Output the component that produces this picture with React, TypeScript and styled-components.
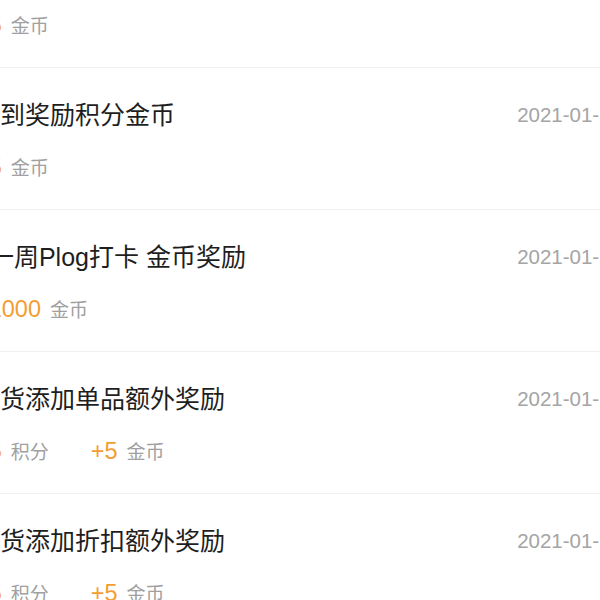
import styled, { createGlobalStyle } from "styled-components";

const GlobalStyle = createGlobalStyle`
  html, body {
    margin: 0;
    padding: 0;
    background: #ffffff;
    overflow: hidden;
  }
`;

const Page = styled.div`
  width: 600px;
  height: 600px;
  overflow: hidden;
  background: #ffffff;
  font-family: "Liberation Sans", "Noto Sans CJK SC", sans-serif;
`;

const List = styled.ul`
  list-style: none;
  margin: -74px 0 0 -25px;
  padding: 0;
  width: 680px;
`;

const Item = styled.li`
  padding: 29px 33px 27px 0;
  border-bottom: 1px solid #f0f0f0;
`;

const Head = styled.div`
  display: flex;
  justify-content: space-between;
  align-items: center;
  height: 36px;
`;

const Title = styled.span`
  font-size: 25px;
  line-height: 36px;
  color: #1e1e1e;
  white-space: nowrap;
`;

const Time = styled.span`
  font-size: 20.5px;
  line-height: 36px;
  color: #a5a5a5;
  white-space: nowrap;
  font-kerning: none;
`;

const Meta = styled.div`
  display: flex;
  align-items: baseline;
  gap: 42px;
  height: 30px;
  margin-top: 19px;
  line-height: 30px;
`;

const Reward = styled.span`
  display: inline-flex;
  align-items: baseline;
`;

const Amount = styled.span`
  font-size: 23.5px;
  color: #f39d32;
`;

const Unit = styled.span`
  margin-left: 9px;
  font-size: 19px;
  color: #a0a0a0;
`;

type Row = {
  title: string;
  time: string;
  rewards: { amount: string; unit: string }[];
};

const rows: Row[] = [
  { title: "签到奖励积分金币", time: "2021-01-20", rewards: [{ amount: "+5", unit: "金币" }] },
  { title: "签到奖励积分金币", time: "2021-01-19", rewards: [{ amount: "+5", unit: "金币" }] },
  { title: "#一周Plog打卡 金币奖励", time: "2021-01-18", rewards: [{ amount: "+1000", unit: "金币" }] },
  {
    title: "晒货添加单品额外奖励",
    time: "2021-01-18",
    rewards: [
      { amount: "+5", unit: "积分" },
      { amount: "+5", unit: "金币" },
    ],
  },
  {
    title: "晒货添加折扣额外奖励",
    time: "2021-01-18",
    rewards: [
      { amount: "+5", unit: "积分" },
      { amount: "+5", unit: "金币" },
    ],
  },
];

export default function App() {
  return (
    <Page>
      <GlobalStyle />
      <List>
        {rows.map((row, i) => (
          <Item key={i}>
            <Head>
              <Title>{row.title}</Title>
              <Time>{row.time}</Time>
            </Head>
            <Meta>
              {row.rewards.map((r, j) => (
                <Reward key={j}>
                  <Amount>{r.amount}</Amount>
                  <Unit>{r.unit}</Unit>
                </Reward>
              ))}
            </Meta>
          </Item>
        ))}
      </List>
    </Page>
  );
}
